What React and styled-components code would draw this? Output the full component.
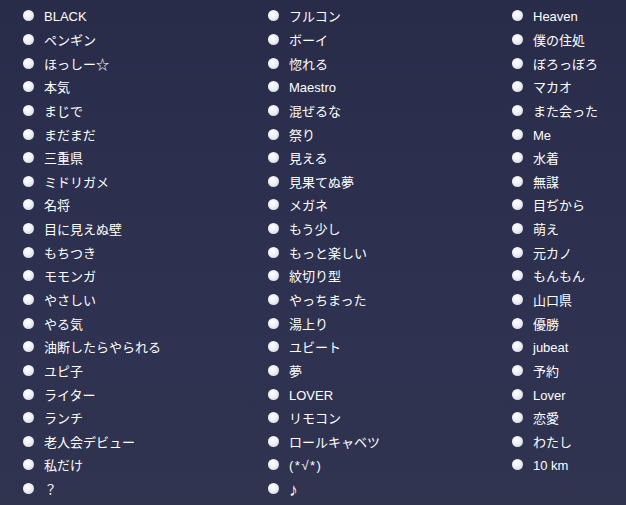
import React from "react";
import styled, { createGlobalStyle } from "styled-components";

const Global = createGlobalStyle`
  html, body { margin: 0; padding: 0; }
  body {
    background: linear-gradient(180deg, #292c49 0%, #2e3150 60%, #31344f 100%);
    min-height: 505px;
    font-family: "Liberation Sans", "Noto Sans CJK JP", sans-serif;
  }
`;

const Page = styled.div`
  width: 626px;
  height: 505px;
  box-sizing: border-box;
  padding: 4px 0 0 23px;
  display: grid;
  grid-template-columns: 245px 244px 1fr;
  overflow: hidden;
`;

const Column = styled.ul`
  list-style: none;
  margin: 0;
  padding: 0;
  display: flex;
  flex-direction: column;
`;

const Item = styled.li`
  height: 23.65px;
  display: flex;
  align-items: center;
  gap: 10px;
  color: #ffffff;
  font-size: 13px;
  white-space: nowrap;
`;

const Bullet = styled.span`
  flex: none;
  width: 11px;
  height: 11px;
  border-radius: 50%;
  background: radial-gradient(circle at 40% 35%, #ffffff 0%, #eef0f6 45%, #c9ccd8 100%);
`;

const Label = styled.span`
  font-size: ${(p) => (p.$big ? "18px" : "13px")};
  line-height: 1;
  padding-top: 2px;
  letter-spacing: ${(p) => (p.$wide ? "1.5px" : "0")};
`;

const cols = [
  ["BLACK", "ペンギン", "ほっしー☆", "本気", "まじで", "まだまだ", "三重県", "ミドリガメ", "名将", "目に見えぬ壁", "もちつき", "モモンガ", "やさしい", "やる気", "油断したらやられる", "ユピ子", "ライター", "ランチ", "老人会デビュー", "私だけ", "？"],
  ["フルコン", "ボーイ", "惚れる", "Maestro", "混ぜるな", "祭り", "見える", "見果てぬ夢", "メガネ", "もう少し", "もっと楽しい", "紋切り型", "やっちまった", "湯上り", "ユビート", "夢", "LOVER", "リモコン", "ロールキャベツ", "(*√*)", "♪"],
  ["Heaven", "僕の住処", "ぼろっぼろ", "マカオ", "また会った", "Me", "水着", "無謀", "目ぢから", "萌え", "元カノ", "もんもん", "山口県", "優勝", "jubeat", "予約", "Lover", "恋愛", "わたし", "10 km"],
];

export default function App() {
  return (
    <>
      <Global />
      <Page>
        {cols.map((c, i) => (
          <Column key={i}>
            {c.map((t, j) => (
              <Item key={j}>
                <Bullet />
                <Label $big={t === "♪"} $wide={t === "(*√*)"}>{t}</Label>
              </Item>
            ))}
          </Column>
        ))}
      </Page>
    </>
  );
}
